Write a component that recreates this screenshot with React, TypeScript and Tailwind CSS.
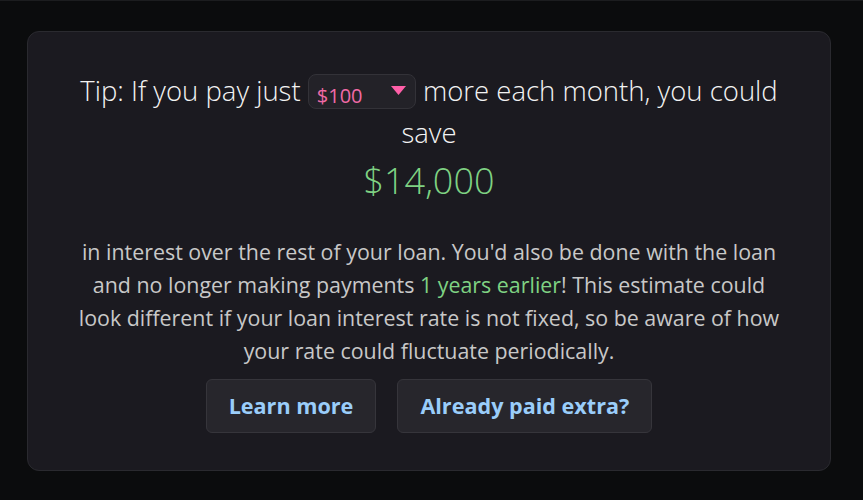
import { useState } from "react";

const AMOUNTS = ["$50", "$100", "$200", "$500"];

export default function App() {
  const [extra, setExtra] = useState("$100");

  return (
    <div
      className="min-h-[500px] w-full bg-[#0b0c0d] pt-[30px] pb-[30px] pl-[27px] pr-[32px] border-t border-[#1c1d1f]"
      style={{ fontFamily: '"Open Sans", "Noto Sans", sans-serif' }}
    >
      <div className="w-[804px] h-[440px] rounded-[12px] border border-[#2a2a2f] bg-[#1b1a20] px-[46px] pt-[38px] text-center">
        <p className="text-[27.5px] font-light leading-[42px] text-[#f3f3f3]">
          Tip: If you pay just{" "}
          <span className="relative inline-flex align-middle -mt-[4px]">
            <select
              value={extra}
              onChange={(e) => setExtra(e.target.value)}
              className="appearance-none w-[108px] h-[35px] rounded-[8px] border border-[#333238] bg-[#232228] pl-[8px] text-left text-[20px] font-normal text-[#f06aa6] outline-none"
            >
              {AMOUNTS.map((a) => (
                <option key={a} value={a}>
                  {a}
                </option>
              ))}
            </select>
            <svg
              className="pointer-events-none absolute right-[10px] top-[12px]"
              width="15"
              height="9"
              viewBox="0 0 15 9"
            >
              <path d="M0 0h15L7.5 9z" fill="#ff5fa8" />
            </svg>
          </span>{" "}
          more each month, you could save
        </p>
        <div className="mt-[3px] text-[36px] font-light leading-[48px] text-[#7fd283]">
          $14,000
        </div>
        <p className="mt-[30px] text-[21.4px] leading-[33px] text-[#c8c8c8]">
          in interest over the rest of your loan. You'd also be done with the loan and no longer making
          payments <span className="text-[#7fd283]">1 years earlier</span>! This estimate could look
          different if your loan interest rate is not fixed, so be aware of how your rate could fluctuate
          periodically.
        </p>
        <div className="mt-[12px] flex items-center justify-center gap-[21px]">
          <button className="h-[54px] rounded-[6px] border border-[#36353b] bg-[#27262c] px-[22px] text-[21.6px] font-bold text-[#9acdfa]">
            Learn more
          </button>
          <button className="h-[54px] rounded-[6px] border border-[#36353b] bg-[#27262c] px-[22px] text-[21.6px] font-bold text-[#9acdfa]">
            Already paid extra?
          </button>
        </div>
      </div>
    </div>
  );
}
